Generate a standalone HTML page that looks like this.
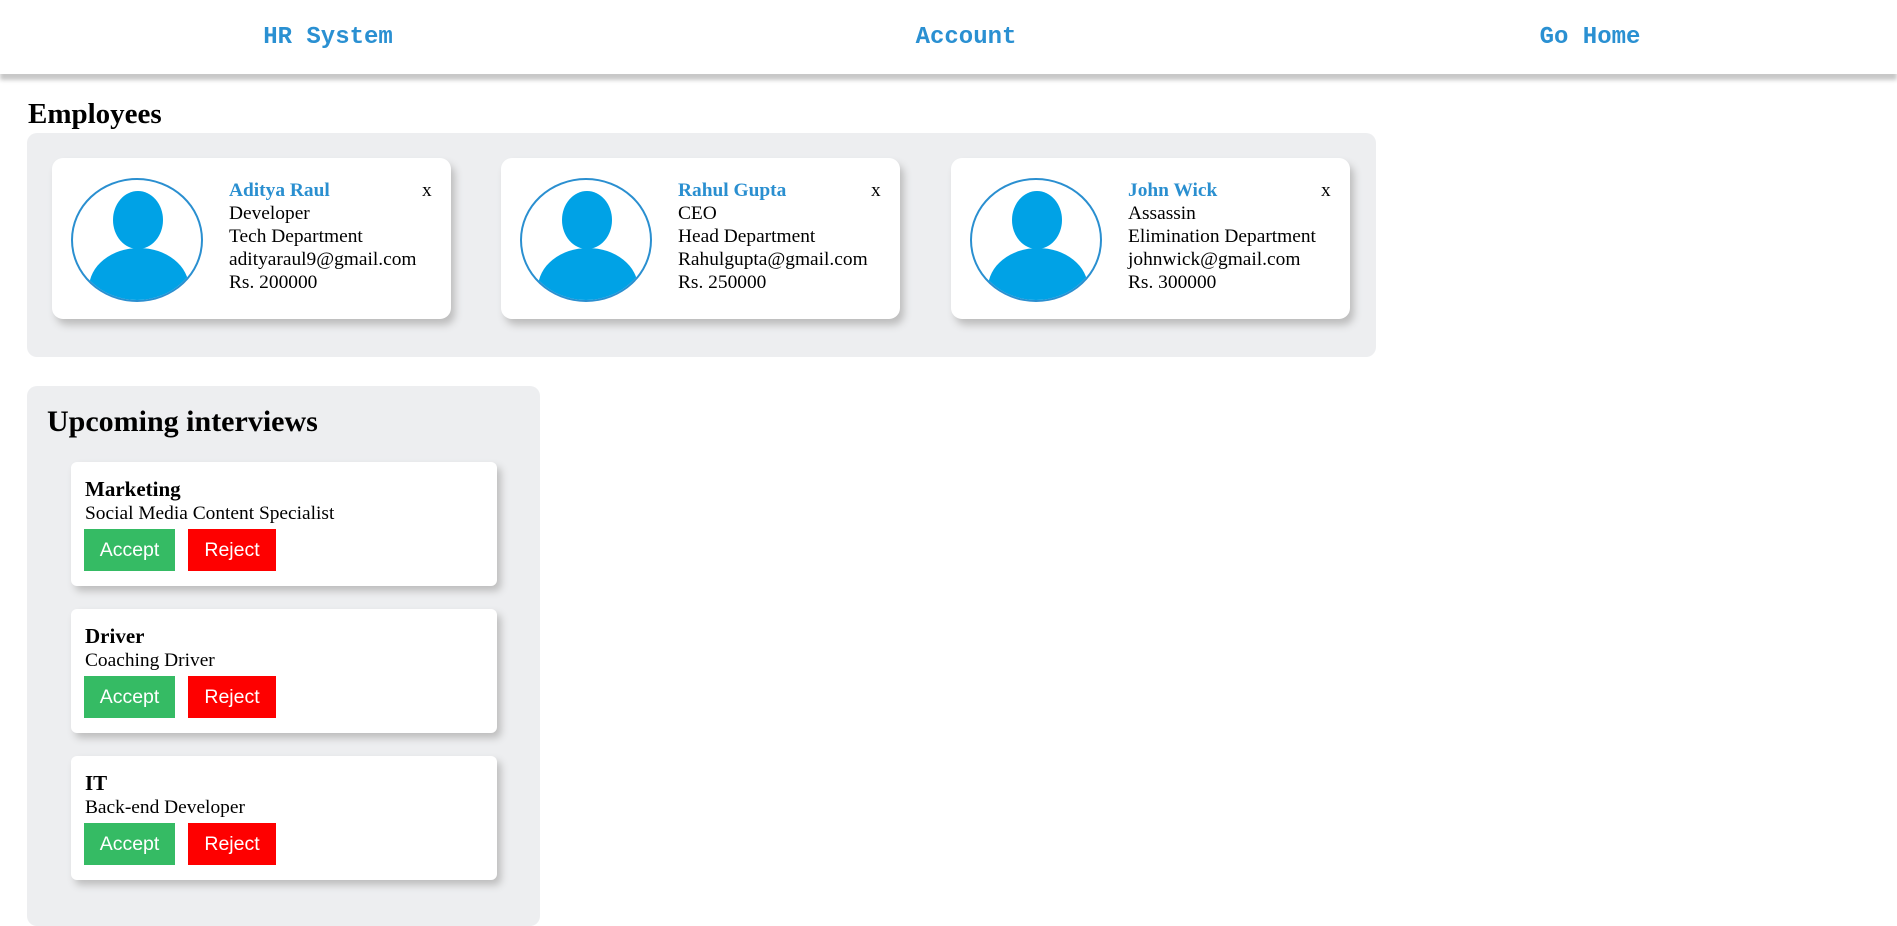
<!DOCTYPE html>
<html><head><meta charset="utf-8"><style>
*{box-sizing:border-box}
body{margin:0;width:1897px;height:896px;overflow:hidden;background:#fff;font-family:"Liberation Serif",serif;font-size:19.4px;color:#000}
.hdr{position:absolute;left:0;top:0;width:1897px;height:74px;background:#fff;box-shadow:0 6px 4px #c8c8c8;}
.hdr span{position:absolute;top:24px;font-family:"Liberation Mono",monospace;font-weight:bold;font-size:24px;color:#2a90d2;transform:translateX(-50%)}
h2{position:absolute;margin:0;font-size:29px;font-weight:bold}
.box{position:absolute;background:#edeef0;border-radius:10px}
.card{position:absolute;top:158px;width:399px;height:161px;background:#fff;border-radius:11px;box-shadow:4px 6px 8px #bdbdbd}
.av{position:absolute;left:19px;top:20px;width:132px;height:124px;border:2px solid #2a8fd0;border-radius:50%;overflow:hidden;background:#fff}
.av .h{position:absolute;left:40px;top:11px;width:50px;height:58px;border-radius:50%;background:#00a2e6}
.av .b{position:absolute;left:16px;top:68px;width:100px;height:80px;border-radius:50% 50% 0 0;background:#00a2e6}
.info{position:absolute;left:177px;top:21px;line-height:23px}
.info b{color:#2a8fd0}
.x{position:absolute;left:370px;top:21px;line-height:23px}
.ic{position:absolute;left:71px;width:426px;height:124px;background:#fff;border-radius:6px;box-shadow:4px 5px 8px #bdbdbd}
.ic .t{position:absolute;left:14px;top:15px;font-weight:bold;font-size:21px;line-height:25px}
.ic .s{position:absolute;left:14px;top:40px;line-height:24px}
.btn{position:absolute;top:67px;height:42px;color:#fff;font-family:"Liberation Sans",sans-serif;font-size:19.5px;line-height:42px;text-align:center}
.a{left:13px;width:91px;background:#35bb64}
.r{left:117px;width:88px;background:#fe0000}
</style></head><body>
<div class="hdr"><span style="left:328px">HR System</span><span style="left:966px">Account</span><span style="left:1590px">Go Home</span></div>
<h2 style="left:28px;top:98px">Employees</h2>
<div class="box" style="left:27px;top:133px;width:1349px;height:224px"></div>
<div class="card" style="left:52px"><div class="av"><div class="h"></div><div class="b"></div></div><div class="info"><b>Aditya Raul</b><br>Developer<br>Tech Department<br>adityaraul9@gmail.com<br>Rs. 200000</div><div class="x">x</div></div>
<div class="card" style="left:501px"><div class="av"><div class="h"></div><div class="b"></div></div><div class="info"><b>Rahul Gupta</b><br>CEO<br>Head Department<br>Rahulgupta@gmail.com<br>Rs. 250000</div><div class="x">x</div></div>
<div class="card" style="left:951px"><div class="av"><div class="h"></div><div class="b"></div></div><div class="info"><b>John Wick</b><br>Assassin<br>Elimination Department<br>johnwick@gmail.com<br>Rs. 300000</div><div class="x">x</div></div>
<div class="box" style="left:27px;top:386px;width:513px;height:540px"></div>
<h2 style="left:47px;top:405px;font-size:30px">Upcoming interviews</h2>
<div class="ic" style="top:462px"><div class="t">Marketing</div><div class="s">Social Media Content Specialist</div><div class="btn a">Accept</div><div class="btn r">Reject</div></div>
<div class="ic" style="top:609px"><div class="t">Driver</div><div class="s">Coaching Driver</div><div class="btn a">Accept</div><div class="btn r">Reject</div></div>
<div class="ic" style="top:756px"><div class="t">IT</div><div class="s">Back-end Developer</div><div class="btn a">Accept</div><div class="btn r">Reject</div></div>
</body></html>
